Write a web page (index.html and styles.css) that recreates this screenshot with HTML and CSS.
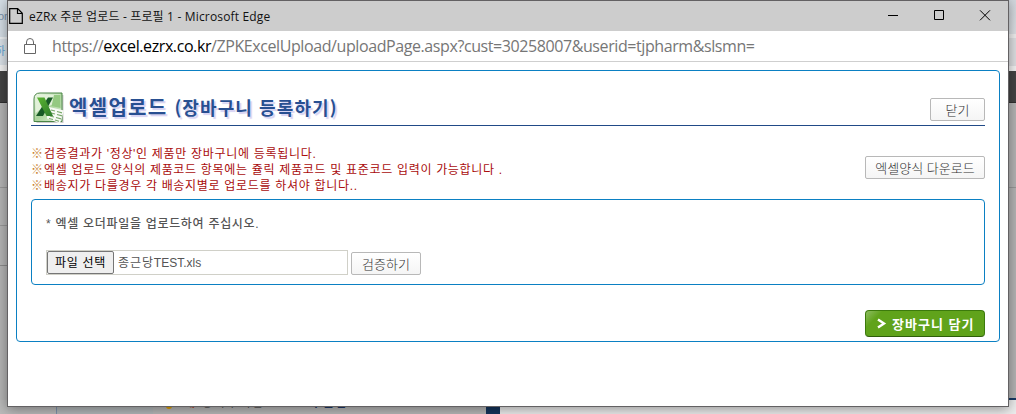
FILE: index.html
```html
<!DOCTYPE html>
<html lang="ko">
<head>
<meta charset="utf-8">
<title>eZRx 주문 업로드</title>
<link rel="stylesheet" href="styles.css">
</head>
<body>
<div class="desktop">
  <div class="strip strip-left"><span class="bit bit-or">or</span><span class="bit bit-plus">하</span></div>
  <div class="strip strip-right"></div>
  <div class="under">
    <div class="under-nav"></div>
    <div class="under-body"><span class="bullet"></span><span class="under-text"><b class="red">새</b> 장바구니담 <b>eZRx 주문담</b></span></div>
    <div class="under-bar"></div>
    <div class="under-light"></div>
  </div>
  <div class="window">
    <header class="titlebar">
      <svg class="doc" width="14" height="16" viewBox="0 0 14 16"><path d="M.7.7h8l4.6 4.6v10H.7zM8.5.7v4.8h4.8" fill="none" stroke="#000" stroke-width="1.2"/></svg>
      <span class="title">eZRx 주문 업로드 - 프로필 1 - Microsoft Edge</span>
      <svg class="controls" width="104" height="12" viewBox="0 0 104 12" fill="none" stroke="#000"><path d="M0 5.500h10M46.500 .5h9v9h-9z"/><path d="M92 .3l10 10M102 .3l-10 10"/></svg>
    </header>
    <div class="address">
      <svg class="lock" width="14" height="17" viewBox="0 0 14 17" fill="none" stroke="#666"><path d="M1.500 6.500h11v9h-11zM3.500 6.500V4a3.500 3.500 0 0 1 7 0v2.500"/></svg>
      <span class="url">https://<span class="host">excel.ezrx.co.kr</span>/ZPKExcelUpload/uploadPage.aspx?cust=30258007&amp;userid=tjpharm&amp;slsmn=</span>
    </div>
    <main class="panel">
      <div class="heading">
        <svg class="excel" width="32" height="32" viewBox="0 0 32 32">
          <defs>
            <linearGradient id="frame" x1="0" y1="0" x2="1" y2="1"><stop offset="0" stop-color="#f4fbef"/><stop offset=".5" stop-color="#a9d39a"/><stop offset="1" stop-color="#e8f4e2"/></linearGradient>
            <linearGradient id="xfill" x1="0" y1="0" x2="1" y2="1"><stop offset="0" stop-color="#5cb531"/><stop offset="1" stop-color="#2c7a2c"/></linearGradient>
          </defs>
          <path d="M8 1.500h21.500v28H2.500V7q0-5.500 5.500-5.500z" transform="translate(1 1.500)" fill="#ccc"/>
          <path d="M7 1h22v28.500H1V7q0-6 6-6z" fill="url(#frame)" stroke="#4b8546"/>
          <path d="M7 2.500h20.500v10Q12 12 2.500 21V7q0-4.500 4.500-4.500z" fill="#e2f1d9"/>
          <path d="M21 3h6.500v13l-9-2z" fill="#94c981"/>
          <path d="M14 14.500l17 4-4 13-13-5z" fill="#f7faf5"/>
          <path d="M18 18l4 1m2 .5l5 1.300M18 21l4 1m2 .5l5 1.300M17 24l4 1m2 .5l5 1.300M16 26.500l4 1m2 .5l4 1.300" stroke="#7aa86b" stroke-width="1.200"/>
          <path d="M15 5.500h5L10 24H3z" fill="#185a25"/>
          <path d="M4 5.500h7.500L20 24h-6.500z" fill="url(#xfill)"/>
        </svg>
        <h1>엑셀업로드 <span class="sub">(장바구니 등록하기)</span></h1>
        <button class="btn btn-close">닫기</button>
      </div>
      <div class="notice">
        <ul>
          <li><i>※</i>검증결과가 '정상'인 제품만 장바구니에 등록됩니다.</li>
          <li><i>※</i>엑셀 업로드 양식의 제품코드 항목에는 쥴릭 제품코드 및 표준코드 입력이 가능합니다 .</li>
          <li><i>※</i>배송지가 다를경우 각 배송지별로 업로드를 하셔야 합니다..</li>
        </ul>
        <button class="btn btn-form">엑셀양식 다운로드</button>
      </div>
      <section class="upload">
        <p>* 엑셀 오더파일을 업로드하여 주십시오.</p>
        <div class="row">
          <div class="file"><button class="choose">파일 선택</button><span class="name">종근당<span class="latin">TEST.xls</span></span></div>
          <button class="btn btn-check">검증하기</button>
        </div>
      </section>
      <div class="footer">
        <button class="cart"><svg width="10" height="11" viewBox="0 0 10 11"><path d="M1 1.500l6 4-6 4" fill="none" stroke="#fff" stroke-width="2.400"/></svg><span>장바구니 담기</span></button>
      </div>
    </main>
  </div>
</div>
</body>
</html>
```
FILE: styles.css
```css
* { box-sizing: border-box; }
body { margin: 0; font-family: "Liberation Sans", "Noto Sans CJK KR", sans-serif; font-size: 12px; }
button { font: inherit; margin: 0; padding: 0; white-space: nowrap; }
.desktop { position: relative; width: 1016px; height: 414px; overflow: hidden; background: #b3b3b3; display: flex; justify-content: space-between; }
.strip { width: 8px; height: 414px; overflow: hidden; }
.strip-left { background: linear-gradient(#d5dee6 0 37px, #eef1f4 37px 39px, #dbe2e8 39px 65px, #f3f3f3 65px 71px, #444 71px 102px, #303030 102px 103px, #b5b5b5 103px 187px, #999 187px 188px, #b5b5b5 188px 225px, #999 225px 226px, #b5b5b5 226px 265px, #8c8c8c 265px 266px, #b5b5b5 266px); }
.strip-right { background: linear-gradient(#d3d8de, #dde1e5 34px, #f0f0f0 34px 38px, #dfe0e3 38px 66px, #f4f4f4 66px 71px, #444 71px 102px, #303030 102px 103px, #b5b5b5 103px 187px, #999 187px 188px, #b5b5b5 188px 398px, #173a66 398px 400px, #eee 400px); }
.bit { display: block; font-size: 11px; line-height: 12px; color: #7891ab; }
.bit-or { margin: 10px 0 0 -2px; }
.bit-plus { margin: 23px 0 0 -5px; color: #62a5d5; }
.under { position: absolute; left: 0; right: 0; bottom: 0; height: 14px; display: flex; overflow: hidden; }
.under-nav { width: 57px; border-right: 1px solid #7e93ad; background: #bababa; }
.under-body { width: 429px; padding-left: 109px; background: linear-gradient(90deg, #b2b7b9 96px, #b8b8b8 96px); display: flex; }
.bullet { width: 6px; height: 6px; margin-top: 3px; border-radius: 3px; background: #e4a200; }
.under-text { margin-left: 12px; font-size: 12px; line-height: 13px; margin-top: -3px; letter-spacing: 1.6px; color: #555; white-space: nowrap; height: 14px; }
.under-text b { color: #1c3768; }
.under-text .red { color: #b14a32; }
.under-bar { width: 14px; background: #14345c; }
.under-light { flex: 1; background: #ededed; }
.window { position: absolute; left: 7px; top: 0; width: 1002px; height: 407px; border: 1px solid #636163; background: #fff; box-shadow: 0 2px 12px rgba(0,0,0,.4); }
.titlebar { height: 30px; background: #cdcdcd; display: flex; align-items: center; padding: 0 16px 0 1px; }
.doc { margin-bottom: 1px; }
.title { margin-left: 6px; font: 12px "Open Sans", "Noto Sans CJK KR", sans-serif; letter-spacing: .17px; white-space: nowrap; color: #111; }
.controls { margin-left: auto; }
.address { height: 31px; border-bottom: 1px solid #cfcfcf; display: flex; align-items: center; padding-left: 15px; }
.url { margin-left: 15px; font: 16px "Open Sans", sans-serif; letter-spacing: -.41px; color: #767676; white-space: nowrap; }
.host { color: #000; }
.panel { margin: 8px 8px 0; height: 272px; border: 1px solid #0b80c3; border-radius: 4px; padding: 0 14px; }
.heading { height: 55px; border-bottom: 1px solid #214a87; display: flex; padding-top: 21px; }
.excel { margin-left: 2px; flex: none; }
h1 { margin: 0 0 0 4px; font: 700 20px/29px "Noto Sans CJK KR", sans-serif; letter-spacing: 1.3px; color: #284f91; text-shadow: 2px 2px 1px #d6d2f2; white-space: nowrap; }
.sub { font-size: 18px; letter-spacing: 1.1px; }
.btn { flex: none; border: 1px solid #b8b8b8; border-radius: 2px; background: linear-gradient(#fff, #f5f5f5); color: #333; font: 300 13px/20px "Noto Sans CJK KR", sans-serif; height: 23px; }
.btn-close { width: 55px; margin: 6px 0 0 auto; }
.notice { display: flex; justify-content: space-between; height: 73px; padding-top: 19px; }
ul { margin: 1px 0 0; padding: 0; list-style: none; color: #a90c0c; white-space: nowrap; }
li { display: flex; line-height: 16px; height: 16px; letter-spacing: .69px; }
li i { width: 13px; font-style: normal; letter-spacing: 0; color: #c9822f; }
.btn-form { width: 120px; margin-top: 11px; }
.upload { height: 86px; border: 1px solid #0b80c3; border-radius: 4px; padding: 15px 14px 0; }
p { margin: 0; line-height: 18px; font-weight: 500; letter-spacing: .7px; color: #555; }
.row { display: flex; margin-top: 17px; }
.file { width: 302px; height: 25px; border: 1px solid #d0d0c8; display: flex; padding: 0; }
.choose { width: 67px; height: 23px; border: 1px solid #767676; border-radius: 2px; background: #efefef; color: #000; line-height: 20px; letter-spacing: .7px; }
.name { margin-left: 4px; line-height: 24px; letter-spacing: .9px; color: #555; }
.latin { letter-spacing: 0; }
.btn-check { width: 70px; margin: 2px 0 0 3px; }
.footer { display: flex; justify-content: flex-end; padding-top: 25px; }
.cart { width: 120px; height: 27px; border: 1px solid #3c7a0c; border-bottom-color: #2f5d0b; border-radius: 4px; background: linear-gradient(135deg, #8fbd62, #60a31b 12px); color: #fff; font: 700 13px/24px "Noto Sans CJK KR", sans-serif; display: flex; align-items: center; padding-left: 11px; }
.cart span { margin-left: 5px; letter-spacing: 1px; }
```
